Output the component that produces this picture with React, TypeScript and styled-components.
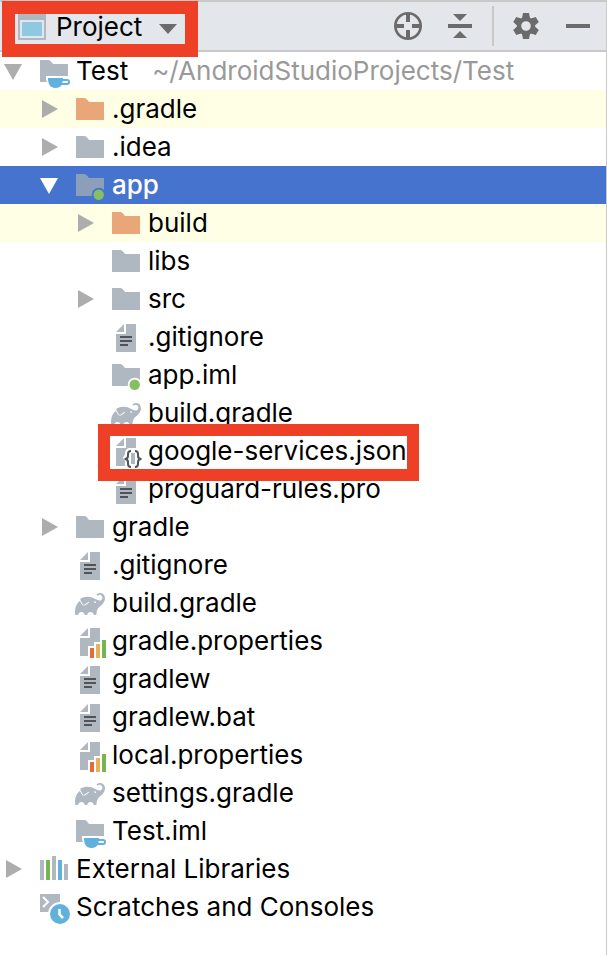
import { useState, type ReactNode } from "react";
import styled, { createGlobalStyle } from "styled-components";

const color = {
  icon: "#afb8c0",
  orange: "#e9a678",
  green: "#85bf5f",
  blue: "#61b1dc",
  ink: "#6b6b6b",
  line: "#c8c8c8",
  header: "#e3e6eb",
  selected: "#4673ce",
  excluded: "#ffffe6",
  mark: "#ee4026",
};

const GlobalStyle = createGlobalStyle`
  *, *::before, *::after { box-sizing: border-box; }
  body {
    margin: 0;
    background: #fff;
    color: #000;
    font-family: Inter, "Liberation Sans", sans-serif;
    font-size: 26px;
    line-height: 32px;
  }
`;

const Panel = styled.main`
  min-height: 100vh;
  border-right: 1px solid ${color.line};
  overflow: hidden;
`;

const Toolbar = styled.header`
  display: flex;
  align-items: center;
  justify-content: space-between;
  height: 52px;
  padding-right: 12px;
  background: ${color.header};
  border-top: 2px solid ${color.line};
  border-bottom: 2px solid ${color.line};
`;

const PlainButton = styled.button`
  display: flex;
  align-items: center;
  padding: 0;
  border: 0;
  background: none;
  color: inherit;
  font: inherit;
  cursor: pointer;
`;

const ViewButton = styled(PlainButton)`
  position: relative;
  height: 48px;
  gap: 8px;
  padding-left: 16px;
`;

const ViewName = styled.span`
  padding-top: 2px;
`;

const Caret = styled.svg`
  margin: 6px 0 0 8px;
`;

const Actions = styled.div`
  display: flex;
  align-items: center;
  gap: 20px;
`;

const Divider = styled.span`
  width: 2px;
  height: 40px;
  margin: 0 -4px;
  background: ${color.line};
`;

const HeaderMark = styled.span`
  position: absolute;
  z-index: 2;
  inset: -1px -20px -7px 2px;
  border: 13px solid ${color.mark};
  pointer-events: none;
`;

const Tree = styled.ul`
  margin: 0;
  padding: 0;
  list-style: none;
`;

const Row = styled.div<{ $depth: number; $tone?: "selected" | "excluded" }>`
  position: relative;
  display: flex;
  align-items: center;
  height: 38px;
  padding: 2px 0 0 ${(p) => 2 + p.$depth * 36}px;
  white-space: nowrap;
  background: ${(p) => (p.$tone ? color[p.$tone] : "transparent")};
  color: ${(p) => (p.$tone === "selected" ? "#fff" : "#000")};
  font-weight: ${(p) => (p.$tone === "selected" ? 500 : 400)};
`;

const ToggleSlot = styled.span`
  flex: none;
  width: 24px;
  height: 24px;
  margin-right: 12px;
`;

const Label = styled.span`
  margin-left: 6px;
  padding-bottom: 2px;
`;

const Path = styled.span`
  margin-left: 24px;
  padding-bottom: 2px;
  color: #999;
`;

const RowMark = styled.span`
  position: absolute;
  z-index: 2;
  top: -8px;
  bottom: -11px;
  left: 98px;
  width: 321px;
  border: 12px solid ${color.mark};
  pointer-events: none;
`;

const Glyph = ({ children }: { children: ReactNode }) => (
  <svg width="32" height="32" viewBox="0 0 32 32" fill={color.icon} aria-hidden="true">
    {children}
  </svg>
);

type IconName =
  | "folder" | "excluded" | "module" | "moduleSelected" | "java" | "text"
  | "json" | "gradle" | "properties" | "libraries" | "scratches";

const TAB = "M2 4h8.500q1.500 0 2.500 1.500L15 8H30";

const icons: Record<IconName, ReactNode> = {
  folder: <path d={`${TAB}V26H2z`} />,
  excluded: <path fill={color.orange} d={`${TAB}V26H2z`} />,
  module: (
    <>
      <path d={`${TAB}V20A7 7 0 0 0 18 26H2z`} />
      <circle cx="24.700" cy="24.700" r="5.200" fill={color.green} />
    </>
  ),
  moduleSelected: (
    <>
      <path fill="#8c9fba" d={`${TAB}V20A7 7 0 0 0 18 26H2z`} />
      <circle cx="24.700" cy="24.700" r="5.200" fill={color.green} />
    </>
  ),
  java: (
    <>
      <path d={`${TAB}V20H8v3q0 1.500 1 3H2z`} />
      <path fill={color.blue} d="M10 22h15c0 6-2 10-7.500 10S10 28 10 22z" />
      <rect x="22" y="24" width="9" height="4" rx="2" fill="none" stroke={color.blue} strokeWidth="2" />
    </>
  ),
  text: (
    <>
      <path d="M6 10l8-8v8zM16 2h10v28H6V12h10z" />
      <path fill="#505357" d="M10 14h12v2H10zM10 18h12v2H10zM10 22h8v2h-8z" />
    </>
  ),
  json: (
    <>
      <path d="M6 10l8-8v8zM16 2h10v10h-7q-4 1-4 6l-2 4 2 3v5H6V12h10z" />
      <path d="M21 17h4v11h-4z" />
      <g fill="none" stroke="#505357" strokeWidth="2">
        <path d="M21 15c-2.500 0-3 1-3 3v2c0 2-1 3-3.500 3 2.500 0 3.500 1 3.500 3v2c0 2 .5 3 3 3" />
        <path d="M25 15c2.500 0 3 1 3 3v2c0 2 1 3 3.500 3-2.500 0-3.500 1-3.500 3v2c0 2-.5 3-3 3" />
      </g>
    </>
  ),
  gradle: (
    <g transform="translate(1 1) scale(1.250)">
      <path d="M22.695 4.297a3.807 3.807 0 0 0-5.290-.090.368.368 0 0 0 0 .533l.460.470a.363.363 0 0 0 .474.032 2.182 2.182 0 0 1 2.860 3.291c-3.023 3.020-7.056-5.447-16.211-1.083a1.240 1.240 0 0 0-.534 1.745l1.571 2.713a1.238 1.238 0 0 0 1.681.461l.037-.020-.029.020.688-.384a16.083 16.083 0 0 0 2.193-1.635.384.384 0 0 1 .499-.016.357.357 0 0 1 .016.534 16.435 16.435 0 0 1-2.316 1.741H8.770l-.696.390a1.958 1.958 0 0 1-.963.250 1.987 1.987 0 0 1-1.726-.989L3.900 9.696C1.060 11.720-.686 15.603.260 20.522a.363.363 0 0 0 .354.296h1.675a.363.363 0 0 0 .370-.331 2.478 2.478 0 0 1 4.915 0 .360.360 0 0 0 .357.317h1.638a.363.363 0 0 0 .357-.317 2.478 2.478 0 0 1 4.914 0 .363.363 0 0 0 .358.317h1.627a.363.363 0 0 0 .363-.357c.037-2.294.656-4.930 2.420-6.250 6.108-4.570 4.502-8.486 3.088-9.900zm-6.229 6.901l-1.165-.584a.730.730 0 1 1 1.165.587z" />
    </g>
  ),
  properties: (
    <>
      <path d="M6 10l8-8v8zM16 2h10v14h-6v4h-6v10H6V12h10z" />
      <path fill="#e46c37" d="M16 22h4v10h-4z" />
      <path fill="#eab158" d="M22 18h4v14h-4z" />
      <path fill="#78b450" d="M28 14h4v18h-4z" />
    </>
  ),
  libraries: (
    <>
      <path d="M2 6h4v20H2zM14 2h4v24h-4zM26 10h4v16h-4z" />
      <path fill="#78b450" d="M8 6h4v20H8z" />
      <path fill={color.blue} d="M20 6h4v20h-4z" />
    </>
  ),
  scratches: (
    <>
      <path d="M2 2h20v18H2z" />
      <path fill="none" stroke="#fff" strokeWidth="2" d="M5 5l5 5-5 5" />
      <circle cx="22" cy="22" r="11" fill={color.blue} stroke="#fff" strokeWidth="2" />
      <path fill="none" stroke="#fff" strokeWidth="2.500" d="M21.500 17v5.500l3.500 3.500" />
    </>
  ),
};

interface Node {
  name: string;
  icon: IconName;
  path?: string;
  branch?: boolean;
  open?: boolean;
  tone?: "selected" | "excluded";
  marked?: boolean;
  children?: Node[];
}

const project: Node[] = [
  {
    name: "Test",
    icon: "java",
    path: "~/AndroidStudioProjects/Test",
    branch: true,
    open: true,
    children: [
      { name: ".gradle", icon: "excluded", branch: true, tone: "excluded" },
      { name: ".idea", icon: "folder", branch: true },
      {
        name: "app",
        icon: "moduleSelected",
        branch: true,
        open: true,
        tone: "selected",
        children: [
          { name: "build", icon: "excluded", branch: true, tone: "excluded" },
          { name: "libs", icon: "folder" },
          { name: "src", icon: "folder", branch: true },
          { name: ".gitignore", icon: "text" },
          { name: "app.iml", icon: "module" },
          { name: "build.gradle", icon: "gradle" },
          { name: "google-services.json", icon: "json", marked: true },
          { name: "proguard-rules.pro", icon: "text" },
        ],
      },
      { name: "gradle", icon: "folder", branch: true },
      { name: ".gitignore", icon: "text" },
      { name: "build.gradle", icon: "gradle" },
      { name: "gradle.properties", icon: "properties" },
      { name: "gradlew", icon: "text" },
      { name: "gradlew.bat", icon: "text" },
      { name: "local.properties", icon: "properties" },
      { name: "settings.gradle", icon: "gradle" },
      { name: "Test.iml", icon: "java" },
    ],
  },
  { name: "External Libraries", icon: "libraries", branch: true },
  { name: "Scratches and Consoles", icon: "scratches" },
];

function TreeItem({ node, depth }: { node: Node; depth: number }) {
  const [open, setOpen] = useState(Boolean(node.open));
  const selected = node.tone === "selected";
  return (
    <li role="treeitem" aria-expanded={node.branch ? open : undefined} aria-selected={selected}>
      <Row $depth={depth} $tone={node.tone}>
        <ToggleSlot>
          {node.branch && (
            <PlainButton type="button" aria-label={`Toggle ${node.name}`} onClick={() => setOpen(!open)}>
              <svg width="24" height="24" viewBox="0 0 24 24" fill={selected ? "#fff" : "#adadad"} aria-hidden="true">
                <path d={open ? "M2 4h18l-9 16z" : "M4 2l16 9-16 9z"} />
              </svg>
            </PlainButton>
          )}
        </ToggleSlot>
        <Glyph>{icons[node.icon]}</Glyph>
        <Label>{node.name}</Label>
        {node.path && <Path>{node.path}</Path>}
        {node.marked && <RowMark />}
      </Row>
      {open && node.children && (
        <Tree role="group">
          {node.children.map((child) => (
            <TreeItem key={child.name} node={child} depth={depth + 1} />
          ))}
        </Tree>
      )}
    </li>
  );
}

export default function App() {
  return (
    <>
      <GlobalStyle />
      <Panel>
        <Toolbar>
          <ViewButton type="button" aria-haspopup="menu">
            <Glyph>
              <path d="M2 2h28v28H2z" />
              <path fill="#e3e6eb" d="M4 10h24v18H4z" />
              <path fill="#90c8e2" d="M6 12h20v14H6z" />
            </Glyph>
            <ViewName>Project</ViewName>
            <Caret width="20" height="12" viewBox="0 0 20 12" fill={color.ink} aria-hidden="true">
              <path d="M1 1h18l-9 10z" />
            </Caret>
            <HeaderMark />
          </ViewButton>
          <Actions>
            <PlainButton type="button" aria-label="Select opened file">
              <Glyph>
                <circle cx="16" cy="16" r="12.700" fill="none" stroke={color.ink} strokeWidth="2.600" />
                <path fill={color.ink} d="M14 3h4v9h-4zM14 20h4v9h-4zM3 14h9v4H3zM20 14h9v4h-9z" />
              </Glyph>
            </PlainButton>
            <PlainButton type="button" aria-label="Collapse all">
              <Glyph>
                <path fill={color.ink} d="M4 14h24v4H4zM9 4h14l-7 7zM9 28h14l-7-7z" />
              </Glyph>
            </PlainButton>
            <Divider />
            <PlainButton type="button" aria-label="Options">
              <Glyph>
                <g fill={color.ink}>
                  {[0, 60, 120].map((angle) => (
                    <path key={angle} transform={`rotate(${angle} 16 16)`} d="M13 3h6l1 5-2 2h-4l-2-2zM13 29h6l1-5-2-2h-4l-2 2z" />
                  ))}
                </g>
                <circle cx="16" cy="16" r="7" fill="none" stroke={color.ink} strokeWidth="4.400" />
              </Glyph>
            </PlainButton>
            <PlainButton type="button" aria-label="Hide">
              <Glyph>
                <path fill={color.ink} d="M4 14h24v4H4z" />
              </Glyph>
            </PlainButton>
          </Actions>
        </Toolbar>
        <Tree role="tree" aria-label="Project files">
          {project.map((node) => (
            <TreeItem key={node.name} node={node} depth={0} />
          ))}
        </Tree>
      </Panel>
    </>
  );
}
